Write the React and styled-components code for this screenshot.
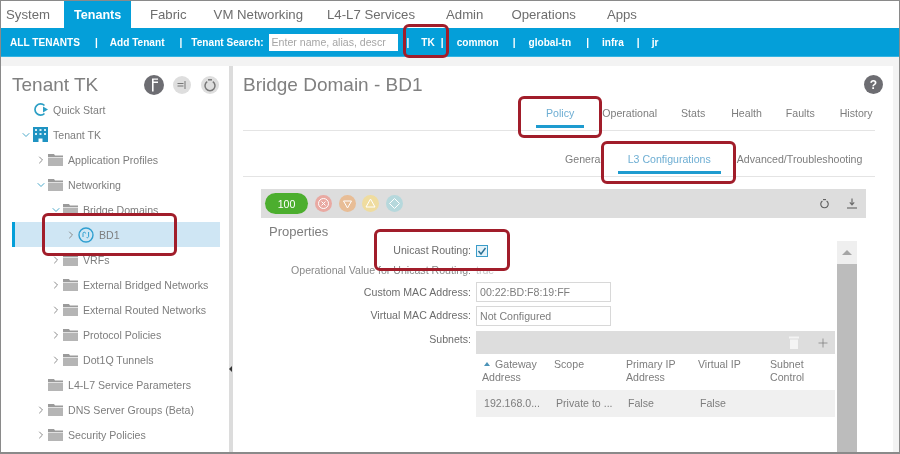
import React from "react";
import styled, { createGlobalStyle } from "styled-components";
import { ChevronDown, ChevronRight, Plus } from "lucide-react";

const nav_items = [
  { name: "System", gap: 5 },
  { name: "Tenants", gap: 14, active: true },
  { name: "Fabric", gap: 19 },
  { name: "VM Networking", gap: 27 },
  { name: "L4-L7 Services", gap: 24 },
  { name: "Admin", gap: 31 },
  { name: "Operations", gap: 28 },
  { name: "Apps", gap: 31 },
];

const tree_items = [
  { name: "Application Profiles", level: 1, arrow: "right" },
  { name: "Networking", level: 1, arrow: "down" },
  { name: "Bridge Domains", level: 2, arrow: "down" },
  { name: "BD1", level: 3, arrow: "right", selected: true },
  { name: "VRFs", level: 2, arrow: "right" },
  { name: "External Bridged Networks", level: 2, arrow: "right" },
  { name: "External Routed Networks", level: 2, arrow: "right" },
  { name: "Protocol Policies", level: 2, arrow: "right" },
  { name: "Dot1Q Tunnels", level: 2, arrow: "right" },
  { name: "L4-L7 Service Parameters", level: 1 },
  { name: "DNS Server Groups (Beta)", level: 1, arrow: "right" },
  { name: "Security Policies", level: 1, arrow: "right" },
  { name: "", level: 1 },
];

const GlobalStyle = createGlobalStyle`
  html, body {
    margin: 0;
    padding: 0;
    background: #fff;
  }
  body {
    font-family: "Liberation Sans", Arial, sans-serif;
  }
`;

const Page = styled.div`
  position: relative;
  width: 900px;
  height: 454px;
  box-sizing: border-box;
  border: 1px solid #8a8a8a;
  border-bottom-width: 2px;
  overflow: hidden;
  display: flex;
  flex-direction: column;
  filter: blur(0.5px);
`;

const TopNav = styled.div`
  display: flex;
  height: 27px;
  flex: none;
`;

const NavItem = styled.div`
  display: flex;
  align-items: center;
  height: 27px;
  font-size: 13.2px;
  color: #6d6d6d;
  margin-left: ${(p) => p.$gap}px;
  ${(p) =>
    p.$active &&
    `
    background: #049fd9;
    color: #fff;
    font-weight: bold;
    font-size: 12.6px;
    padding: 0 10px;
    width: 47px;
  `}
`;

const SubBar = styled.div`
  display: flex;
  align-items: center;
  height: 29px;
  flex: none;
  background: #049fd9;
  border-bottom: 1px solid #35b4e2;
  box-sizing: border-box;
  padding-left: 9px;
  color: #fff;
  font-size: 10.1px;
  font-weight: bold;
`;

const SubLink = styled.span`
  white-space: nowrap;
  margin-left: ${(p) => p.$gap || 0}px;
`;

const SearchInput = styled.div`
  width: 129px;
  height: 17px;
  margin-left: 5px;
  background: #fff;
  color: #a5a5a5;
  font-size: 10.6px;
  font-weight: normal;
  line-height: 17px;
  padding-left: 3px;
  box-sizing: border-box;
  white-space: nowrap;
  overflow: hidden;
`;

const Strip = styled.div`
  height: 9px;
  flex: none;
  background: #f3f3f3;
`;

const Body = styled.div`
  flex: 1;
  display: flex;
  min-height: 0;
`;

const LeftPane = styled.div`
  width: 228px;
  flex: none;
  padding-top: 6px;
  overflow: hidden;
`;

const Splitter = styled.div`
  width: 4px;
  flex: none;
  background: #dcdcdc;
  position: relative;
  &::after {
    content: "";
    position: absolute;
    top: 300px;
    left: 0;
    border: 3px solid transparent;
    border-left: 0;
    border-right: 3px solid #333;
  }
`;

const PaneHead = styled.div`
  display: flex;
  align-items: center;
  height: 25px;
  padding-left: ${(p) => p.$inset}px;
`;

const Title = styled.div`
  font-size: 19px;
  color: #808080;
  white-space: nowrap;
  flex: 1;
`;

const HeadIcons = styled.div`
  display: flex;
  gap: 8px;
  margin-right: 9px;
`;

const Row = styled.div`
  position: relative;
  display: flex;
  align-items: center;
  height: 25px;
  margin-left: 11px;
  width: 208px;
  box-sizing: border-box;
  padding-left: ${(p) => p.$indent}px;
  font-size: 10.6px;
  color: #7d7d7d;
  white-space: nowrap;
  ${(p) =>
    p.$selected &&
    `
    background: #cfe6f4;
    border-left: 3px solid #049fd9;
    padding-left: ${p.$indent - 3}px;
  `}
`;

const ArrowSlot = styled.span`
  width: 15px;
  flex: none;
  display: flex;
  justify-content: center;
  color: ${(p) => (p.$down ? "#4aa8c9" : "#8a8a8a")};
`;

const RowLabel = styled.span`
  margin-left: 5px;
`;

const MainPane = styled.div`
  flex: 1;
  min-width: 0;
  padding: 6px 0 0 10px;
  display: flex;
  flex-direction: column;
  overflow: hidden;
`;

const HelpBadge = styled.div`
  width: 19px;
  height: 19px;
  border-radius: 50%;
  background: #6d6d72;
  color: #fff;
  font-size: 12px;
  font-weight: bold;
  display: flex;
  align-items: center;
  justify-content: center;
  margin-right: 10px;
`;

const TabRow = styled.div`
  display: flex;
  height: ${(p) => p.$height}px;
  width: 632px;
  flex: none;
  border-bottom: 1px solid #e4e4e4;
  box-sizing: border-box;
`;

const Tab = styled.div`
  position: relative;
  margin-left: ${(p) => p.$gap}px;
  padding-top: ${(p) => p.$pad}px;
  font-size: 10.6px;
  color: ${(p) => (p.$active ? "#6eaed3" : "#7d7d7d")};
  white-space: nowrap;
  ${(p) =>
    p.$active &&
    `
    &::after {
      content: "";
      position: absolute;
      left: -10px;
      right: -10px;
      bottom: 2px;
      height: 3px;
      background: #1e9bcf;
    }
  `}
`;

const Toolbar = styled.div`
  display: flex;
  align-items: center;
  height: 29px;
  width: 605px;
  flex: none;
  margin: 12px 0 0 18px;
  background: #dddddd;
  padding: 0 7px 0 4px;
  box-sizing: border-box;
`;

const HealthPill = styled.div`
  width: 43px;
  height: 21px;
  border-radius: 11px;
  background: #4cae2e;
  color: #fff;
  font-size: 10.6px;
  display: flex;
  align-items: center;
  justify-content: center;
  margin-right: 7px;
`;

const StatusIcons = styled.div`
  display: flex;
  gap: 6.5px;
  flex: 1;
`;

const ToolIcons = styled.div`
  display: flex;
  gap: 13px;
`;

const Content = styled.div`
  flex: 1;
  display: flex;
  min-height: 0;
  margin-left: 26px;
`;

const Properties = styled.div`
  width: 566px;
  flex: none;
`;

const SectionTitle = styled.div`
  font-size: 13px;
  color: #7d7d7d;
  margin-top: 6px;
  height: 18px;
  line-height: 16px;
`;

const FormGrid = styled.div`
  display: grid;
  grid-template-columns: 202px 1fr;
  column-gap: 5px;
  font-size: 10.6px;
  color: #6d6d6d;
`;

const FieldLabel = styled.div`
  display: flex;
  justify-content: flex-end;
  height: ${(p) => p.$h}px;
  line-height: ${(p) => p.$lh}px;
  white-space: nowrap;
  color: ${(p) => (p.$muted ? "#8a8a8a" : "#6d6d6d")};
`;

const FieldValue = styled.div`
  line-height: 16px;
  color: #c4c4c4;
`;

const TextBox = styled.div`
  width: 135px;
  height: 20px;
  box-sizing: border-box;
  border: 1px solid #d8d8d8;
  padding-left: 3px;
  line-height: 18px;
  color: #7d7d7d;
`;

const Check = styled.div`
  width: 12px;
  height: 12px;
  margin-top: 3px;
  box-sizing: border-box;
  border: 1px solid #3a9cc9;
  background: #e4f2f9;
  display: flex;
  align-items: center;
  justify-content: center;
`;

const TableBar = styled.div`
  height: 23px;
  background: #dddddd;
  display: flex;
  align-items: center;
  justify-content: flex-end;
  gap: 16px;
  padding-right: 5px;
  margin-top: 1px;
`;

const TableRow = styled.div`
  display: grid;
  grid-template-columns: 72px 72px 72px 72px 1fr;
  height: ${(p) => p.$h}px;
  background: ${(p) => p.$bg || "transparent"};
  align-items: ${(p) => (p.$center ? "center" : "start")};
  line-height: 13px;
  color: #7d7d7d;
`;

const HeadCell = styled.div`
  padding: 4px 0 0 6px;
  white-space: pre-line;
`;

const BodyCell = styled.div`
  padding-left: 8px;
  white-space: nowrap;
`;

const SortMark = styled.span`
  display: inline-block;
  margin: 0 5px 2px 2px;
  border: 3px solid transparent;
  border-top: 0;
  border-bottom: 4px solid #4b93b8;
`;

const Scroller = styled.div`
  width: 20px;
  flex: none;
  margin-left: 2px;
  margin-top: 23px;
  display: flex;
  flex-direction: column;
`;

const ScrollUp = styled.div`
  height: 23px;
  flex: none;
  background: #efefef;
  display: flex;
  align-items: center;
  justify-content: center;
  &::before {
    content: "";
    border: 5px solid transparent;
    border-top: 0;
    border-bottom: 5px solid #a5a5a5;
  }
`;

const ScrollThumb = styled.div`
  flex: 1;
  background: #bcbcbc;
`;

const RightStrip = styled.div`
  width: 6px;
  flex: none;
  background: #f3f3f3;
`;

const Callout = styled.div`
  position: absolute;
  left: ${(p) => p.$x}px;
  top: ${(p) => p.$y}px;
  width: ${(p) => p.$w}px;
  height: ${(p) => p.$h}px;
  box-sizing: border-box;
  border: 3px solid #a11d2a;
  border-radius: 6px;
`;

const Folder = () => (
  <svg width="15" height="13" viewBox="0 0 15 13">
    <path d="M0 1h6l1 1.5h8V4H0z" fill="#9b9b9b" />
    <rect y="4.6" width="15" height="8.4" fill="#b5b5b5" />
  </svg>
);

const BdIcon = () => (
  <svg width="16" height="16" viewBox="0 0 16 16" fill="none" stroke="#2f9fd0">
    <circle cx="8" cy="8" r="7" strokeWidth="1.4" />
    <path d="M5 10V6.5a1.3 1.3 0 0 1 2.6 0M10.6 5v4.5a1.3 1.3 0 0 1-2 1" strokeWidth="1" />
  </svg>
);

const QuickStartIcon = () => (
  <svg width="15" height="15" viewBox="0 0 15 15" fill="none">
    <path d="M11.5 3.5A5.6 5.6 0 1 0 11.5 11.5" stroke="#2c9fc5" strokeWidth="1.7" />
    <path d="M10 4.5 15 7.5 10 10.5z" fill="#2c9fc5" />
  </svg>
);

const TenantIcon = () => (
  <svg width="15" height="15" viewBox="0 0 15 15">
    <path d="M0 0h15v15H9.5v-3.5h-4V15H0z" fill="#1f93c2" />
    <path d="M2 2h2v2H2zM6.5 2h2v2h-2zM11 2h2v2h-2zM2 6h2v2H2zM6.5 6h2v2h-2zM11 6h2v2h-2z" fill="#d5edf6" />
  </svg>
);

const PolicyGlyph = () => (
  <svg width="20" height="20" viewBox="0 0 20 20">
    <circle cx="10" cy="10" r="10" fill="#6d6d72" />
    <path d="M8 3.5v13h1.6V8H14V6.6H9.6V4.8h4.4V3.5z" fill="#fff" />
  </svg>
);

const CollapseGlyph = () => (
  <svg width="20" height="20" viewBox="0 0 20 20" fill="none">
    <circle cx="10" cy="10" r="9" fill="#dedede" />
    <path d="M5.5 8.5h6M5.5 11h6M13 6v8" stroke="#777" strokeWidth="1" />
  </svg>
);

const RefreshGlyph = ({ size = 20, bg = "#dedede", color = "#777" }) => (
  <svg width={size} height={size} viewBox="0 0 20 20" fill="none">
    <circle cx="10" cy="10" r="9" fill={bg} />
    <path d="M7.2 6.6a5 5 0 1 0 5.6 0" stroke={color} strokeWidth="1.5" />
    <path d="M8 4.8h4" stroke={color} strokeWidth="1.5" />
  </svg>
);

const DownloadGlyph = () => (
  <svg width="14" height="14" viewBox="0 0 14 14" fill="none" stroke="#6d6d6d">
    <path d="M7 2.5v6M4.8 6.4 7 8.8l2.2-2.4" strokeWidth="1.2" />
    <path d="M2 12h10" strokeWidth="1.2" />
  </svg>
);

const StatusDot = ({ bg, children }) => (
  <svg width="17" height="17" viewBox="0 0 17 17" fill="none">
    <circle cx="8.5" cy="8.5" r="8.5" fill={bg} />
    {children}
  </svg>
);

const TrashGlyph = () => (
  <svg width="12" height="15" viewBox="0 0 12 15">
    <path d="M1 1.5h10v2H1zM2 4.5h8V14H2z" fill="#f4f4f4" />
  </svg>
);

const App = () => {
  return (
    <>
      <GlobalStyle />
      <Page>
        <TopNav>
          {nav_items.map((item) => (
            <NavItem key={item.name} $gap={item.gap} $active={item.active}>
              {item.name}
            </NavItem>
          ))}
        </TopNav>

        <SubBar>
          <SubLink>ALL TENANTS</SubLink>
          <SubLink $gap={15}>|</SubLink>
          <SubLink $gap={12}>Add Tenant</SubLink>
          <SubLink $gap={15}>|</SubLink>
          <SubLink $gap={9}>Tenant Search:</SubLink>
          <SearchInput>Enter name, alias, descr</SearchInput>
          <SubLink $gap={9}>|</SubLink>
          <SubLink $gap={12}>TK</SubLink>
          <SubLink $gap={6}>|</SubLink>
          <SubLink $gap={13}>common</SubLink>
          <SubLink $gap={14}>|</SubLink>
          <SubLink $gap={13}>global-tn</SubLink>
          <SubLink $gap={15}>|</SubLink>
          <SubLink $gap={13}>infra</SubLink>
          <SubLink $gap={13}>|</SubLink>
          <SubLink $gap={12}>jr</SubLink>
        </SubBar>
        <Strip />

        <Body>
          <LeftPane>
            <PaneHead $inset={11}>
              <Title>Tenant TK</Title>
              <HeadIcons>
                <PolicyGlyph />
                <CollapseGlyph />
                <RefreshGlyph />
              </HeadIcons>
            </PaneHead>
            <Row $indent={21}>
              <QuickStartIcon />
              <RowLabel>Quick Start</RowLabel>
            </Row>
            <Row $indent={6}>
              <ArrowSlot $down>
                <ChevronDown size={12} />
              </ArrowSlot>
              <TenantIcon />
              <RowLabel>Tenant TK</RowLabel>
            </Row>
            {tree_items.map((item, index) => (
              <Row
                key={index}
                $indent={6 + item.level * 15}
                $selected={item.selected}
              >
                <ArrowSlot $down={item.arrow === "down"}>
                  {item.arrow === "down" && <ChevronDown size={12} />}
                  {item.arrow === "right" && <ChevronRight size={12} />}
                </ArrowSlot>
                {item.selected ? <BdIcon /> : <Folder />}
                <RowLabel>{item.name}</RowLabel>
              </Row>
            ))}
          </LeftPane>
          <Splitter />

          <MainPane>
            <PaneHead $inset={0}>
              <Title>Bridge Domain - BD1</Title>
              <HelpBadge>?</HelpBadge>
            </PaneHead>
            <TabRow $height={34}>
              <Tab $gap={303} $pad={10} $active>
                Policy
              </Tab>
              <Tab $gap={28} $pad={10}>
                Operational
              </Tab>
              <Tab $gap={24} $pad={10}>
                Stats
              </Tab>
              <Tab $gap={26} $pad={10}>
                Health
              </Tab>
              <Tab $gap={24} $pad={10}>
                Faults
              </Tab>
              <Tab $gap={25} $pad={10}>
                History
              </Tab>
            </TabRow>
            <TabRow $height={46}>
              <Tab $gap={322} $pad={22}>
                General
              </Tab>
              <Tab $gap={25} $pad={22} $active>
                L3 Configurations
              </Tab>
              <Tab $gap={26} $pad={22}>
                Advanced/Troubleshooting
              </Tab>
            </TabRow>

            <Toolbar>
              <HealthPill>100</HealthPill>
              <StatusIcons>
                <StatusDot bg="#e9a9a2">
                  <circle cx="8.5" cy="8.5" r="5" stroke="#fff" strokeWidth="1" />
                  <path d="M6.5 6.5l4 4M10.5 6.5l-4 4" stroke="#fff" />
                </StatusDot>
                <StatusDot bg="#e8bd96">
                  <path d="M4.5 6h8l-4 7z" stroke="#fff" />
                </StatusDot>
                <StatusDot bg="#efdc9f">
                  <path d="M8.5 4l4.5 8h-9z" stroke="#fff" />
                </StatusDot>
                <StatusDot bg="#b6d8dc">
                  <path d="M8.5 3.5l5 5-5 5-5-5z" stroke="#fff" />
                </StatusDot>
              </StatusIcons>
              <ToolIcons>
                <RefreshGlyph size={15} bg="transparent" color="#5f5f5f" />
                <DownloadGlyph />
              </ToolIcons>
            </Toolbar>

            <Content>
              <Properties>
                <SectionTitle>Properties</SectionTitle>
                <FormGrid>
                  <FieldLabel $h={20} $lh={16}>Unicast Routing:</FieldLabel>
                  <FieldValue>
                    <Check>
                      <svg width="10" height="10" viewBox="0 0 10 10" fill="none">
                        <path d="M1.5 5 4 8l4.5-6" stroke="#2a6f93" strokeWidth="1.4" />
                      </svg>
                    </Check>
                  </FieldValue>
                  <FieldLabel $h={20} $lh={16} $muted>Operational Value for Unicast Routing:</FieldLabel>
                  <FieldValue>true</FieldValue>
                  <FieldLabel $h={24} $lh={20}>Custom MAC Address:</FieldLabel>
                  <FieldValue>
                    <TextBox>00:22:BD:F8:19:FF</TextBox>
                  </FieldValue>
                  <FieldLabel $h={24} $lh={19}>Virtual MAC Address:</FieldLabel>
                  <FieldValue>
                    <TextBox>Not Configured</TextBox>
                  </FieldValue>
                  <FieldLabel $h={24} $lh={18}>Subnets:</FieldLabel>
                  <div>
                    <TableBar>
                      <TrashGlyph />
                      <Plus size={14} color="#777" strokeWidth={1.2} />
                    </TableBar>
                    <TableRow $h={36}>
                      <HeadCell>
                        <SortMark />
                        {"Gateway\nAddress"}
                      </HeadCell>
                      <HeadCell>Scope</HeadCell>
                      <HeadCell>{"Primary IP\nAddress"}</HeadCell>
                      <HeadCell>Virtual IP</HeadCell>
                      <HeadCell>{"Subnet\nControl"}</HeadCell>
                    </TableRow>
                    <TableRow $h={27} $bg="#f0f0f0" $center>
                      <BodyCell>192.168.0...</BodyCell>
                      <BodyCell>Private to ...</BodyCell>
                      <BodyCell>False</BodyCell>
                      <BodyCell>False</BodyCell>
                      <BodyCell />
                    </TableRow>
                  </div>
                </FormGrid>
              </Properties>
              <Scroller>
                <ScrollUp />
                <ScrollThumb />
              </Scroller>
            </Content>
          </MainPane>
          <RightStrip />
        </Body>

        <Callout $x={402} $y={23} $w={46} $h={34} />
        <Callout $x={517} $y={95} $w={84} $h={42} />
        <Callout $x={600} $y={140} $w={135} $h={43} />
        <Callout $x={41} $y={212} $w={135} $h={43} />
        <Callout $x={373} $y={228} $w={136} $h={42} />
      </Page>
    </>
  );
};

export default App;
